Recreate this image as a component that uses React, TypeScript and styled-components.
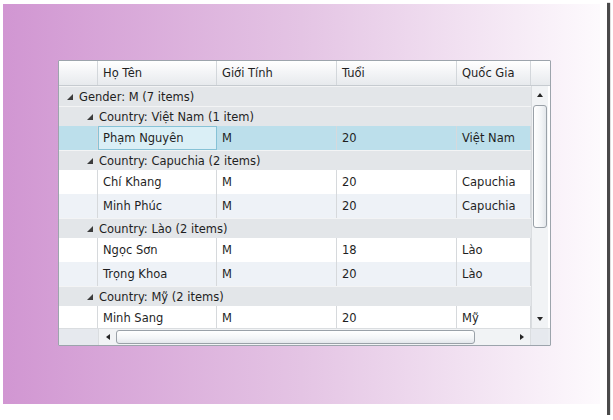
import styled, { createGlobalStyle } from "styled-components";

const GlobalStyle = createGlobalStyle`
  html, body {
    margin: 0;
    padding: 0;
    background: #ffffff;
  }
  body {
    font-family: "DejaVu Sans", Verdana, sans-serif;
  }
`;

const Frame = styled.div`
  width: 607px;
  height: 415px;
  box-sizing: border-box;
  padding: 4px 0 0 3px;
  background: #ffffff;
  box-shadow: 3px 3px 1px #4a4a4a;
`;

const Backdrop = styled.div`
  width: 597px;
  height: 400px;
  box-sizing: border-box;
  padding: 56px 0 0 55px;
  background: linear-gradient(to right, #d196d2 0%, #e4c4e4 50%, #fdfafd 100%);
`;

const Grid = styled.div`
  width: 491px;
  border: 1px solid #9ca4ac;
  border-radius: 1px;
  background: #ffffff;
  display: flex;
  flex-direction: column;
  font-size: 11.5px;
  color: #1f1f1f;
`;

const COLS = "39px 119px 120px 120px 74px";

const HeaderRow = styled.div`
  display: grid;
  grid-template-columns: ${COLS} 17px;
  height: 25px;
  box-sizing: border-box;
  border-bottom: 1px solid #c6cbd0;
  background: linear-gradient(to bottom, #ffffff 0%, #f4f5f7 45%, #e7eaed 100%);
`;

const HeaderCell = styled.div<{ $last?: boolean }>`
  display: flex;
  align-items: center;
  padding-left: 5px;
  border-right: ${(p) => (p.$last ? "none" : "1px solid #d3d7db")};
`;

const Body = styled.div`
  display: flex;
  height: 242px;
`;

const Rows = styled.div`
  width: 472px;
  overflow: hidden;
`;

const GroupRow = styled.div<{ $level: number }>`
  height: 20px;
  box-sizing: border-box;
  display: flex;
  align-items: center;
  gap: 6px;
  padding-left: ${(p) => (p.$level === 0 ? 8 : 28)}px;
  border-top: 1px solid #f3f4f5;
  background: #e3e6e9;
  white-space: nowrap;
`;

const Expander = () => (
  <svg width="6" height="6" viewBox="0 0 6 6">
    <polygon points="6,0 6,6 0,6" fill="#3c3c3c" />
  </svg>
);

const DataRow = styled.div<{ $alt?: boolean; $selected?: boolean }>`
  display: grid;
  grid-template-columns: ${COLS};
  height: 24px;
  background: ${(p) => (p.$selected ? "#bcdfeb" : p.$alt ? "#eef2f7" : "#ffffff")};
`;

const Cell = styled.div<{ $focus?: boolean }>`
  display: flex;
  align-items: center;
  padding-left: 5px;
  box-sizing: border-box;
  border-right: 1px solid #d6d9dc;
  white-space: nowrap;
  overflow: hidden;
  ${(p) =>
    p.$focus &&
    `
    border: 1px solid #86c2d6;
    background: #daeff6;
    padding-left: 4px;
  `}
`;

const RowHeader = styled.div`
  border-right: 1px solid #d6d9dc;
`;

const VScroll = styled.div`
  width: 17px;
  display: flex;
  flex-direction: column;
  box-sizing: border-box;
  border-left: 1px solid #dadde0;
  background: #f1f3f5;
`;

const ArrowButton = styled.div<{ $w?: number }>`
  height: 18px;
  width: ${(p) => (p.$w ? `${p.$w}px` : "auto")};
  display: flex;
  align-items: center;
  justify-content: center;
  flex-shrink: 0;
`;

const VTrack = styled.div`
  flex: 1;
  display: flex;
  flex-direction: column;
  padding: 1px 1px 0 1px;
`;

const VThumb = styled.div`
  height: 123px;
  box-sizing: border-box;
  border: 1px solid #9aa1a8;
  border-radius: 3px;
  background: linear-gradient(to right, #ffffff 0%, #f3f5f7 60%, #e3e7eb 100%);
`;

const HScrollRow = styled.div`
  display: flex;
  height: 16px;
  background: #e9ecf0;
  border-top: 1px solid #dadde0;
`;

const HGutter = styled.div<{ $w: number }>`
  width: ${(p) => p.$w}px;
  background: #e6e9ee;
  flex-shrink: 0;
`;

const HBar = styled.div`
  width: 433px;
  display: flex;
  align-items: center;
  background: #f1f3f5;
  border-left: 1px solid #dadde0;
  border-right: 1px solid #dadde0;
  box-sizing: border-box;
`;

const HThumb = styled.div`
  width: 359px;
  height: 14px;
  box-sizing: border-box;
  border: 1px solid #9aa1a8;
  border-radius: 3px;
  background: linear-gradient(to bottom, #ffffff 0%, #f3f5f7 60%, #e3e7eb 100%);
`;

const HSpacer = styled.div`
  flex: 1;
`;

const Tri = ({ dir }: { dir: "up" | "down" | "left" | "right" }) => {
  const pts = {
    up: "0,4 3,0 6,4",
    down: "0,0 6,0 3,4",
    left: "4,0 4,6 0,3",
    right: "0,0 4,3 0,6",
  }[dir];
  const horiz = dir === "left" || dir === "right";
  return (
    <svg width={horiz ? 4 : 6} height={horiz ? 6 : 4} viewBox={horiz ? "0 0 4 6" : "0 0 6 4"}>
      <polygon points={pts} fill="#262626" />
    </svg>
  );
};

type Person = { name: string; gender: string; age: number; country: string };

// count is the group's item total; only the rows visible in the viewport are listed
const groups: { country: string; count: number; people: Person[] }[] = [
  { country: "Việt Nam", count: 1, people: [{ name: "Phạm Nguyên", gender: "M", age: 20, country: "Việt Nam" }] },
  {
    country: "Capuchia",
    count: 2,
    people: [
      { name: "Chí Khang", gender: "M", age: 20, country: "Capuchia" },
      { name: "Minh Phúc", gender: "M", age: 20, country: "Capuchia" },
    ],
  },
  {
    country: "Lào",
    count: 2,
    people: [
      { name: "Ngọc Sơn", gender: "M", age: 18, country: "Lào" },
      { name: "Trọng Khoa", gender: "M", age: 20, country: "Lào" },
    ],
  },
  {
    country: "Mỹ",
    count: 2,
    people: [{ name: "Minh Sang", gender: "M", age: 20, country: "Mỹ" }],
  },
];

function App() {
  return (
    <>
      <GlobalStyle />
      <Frame>
        <Backdrop>
          <Grid>
            <HeaderRow>
              <HeaderCell />
              <HeaderCell>Họ Tên</HeaderCell>
              <HeaderCell>Giới Tính</HeaderCell>
              <HeaderCell>Tuổi</HeaderCell>
              <HeaderCell>Quốc Gia</HeaderCell>
              <HeaderCell $last />
            </HeaderRow>
            <Body>
              <Rows>
                <GroupRow $level={0}>
                  <Expander />
                  Gender: M (7 items)
                </GroupRow>
                {groups.map((g) => (
                  <div key={g.country}>
                    <GroupRow $level={1}>
                      <Expander />
                      Country: {g.country} ({g.count} {g.count === 1 ? "item" : "items"})
                    </GroupRow>
                    {g.people.map((p, i) => {
                      const selected = p.name === "Phạm Nguyên";
                      return (
                        <DataRow key={p.name} $alt={i % 2 === 1} $selected={selected}>
                          <RowHeader />
                          <Cell $focus={selected}>{p.name}</Cell>
                          <Cell>{p.gender}</Cell>
                          <Cell>{p.age}</Cell>
                          <Cell>{p.country}</Cell>
                        </DataRow>
                      );
                    })}
                  </div>
                ))}
              </Rows>
              <VScroll>
                <ArrowButton>
                  <Tri dir="up" />
                </ArrowButton>
                <VTrack>
                  <VThumb />
                </VTrack>
                <ArrowButton>
                  <Tri dir="down" />
                </ArrowButton>
              </VScroll>
            </Body>
            <HScrollRow>
              <HGutter $w={39} />
              <HBar>
                <ArrowButton $w={17}>
                  <Tri dir="left" />
                </ArrowButton>
                <HThumb />
                <HSpacer />
                <ArrowButton $w={17}>
                  <Tri dir="right" />
                </ArrowButton>
              </HBar>
              <HGutter $w={17} />
            </HScrollRow>
          </Grid>
        </Backdrop>
      </Frame>
    </>
  );
}

export default App;
